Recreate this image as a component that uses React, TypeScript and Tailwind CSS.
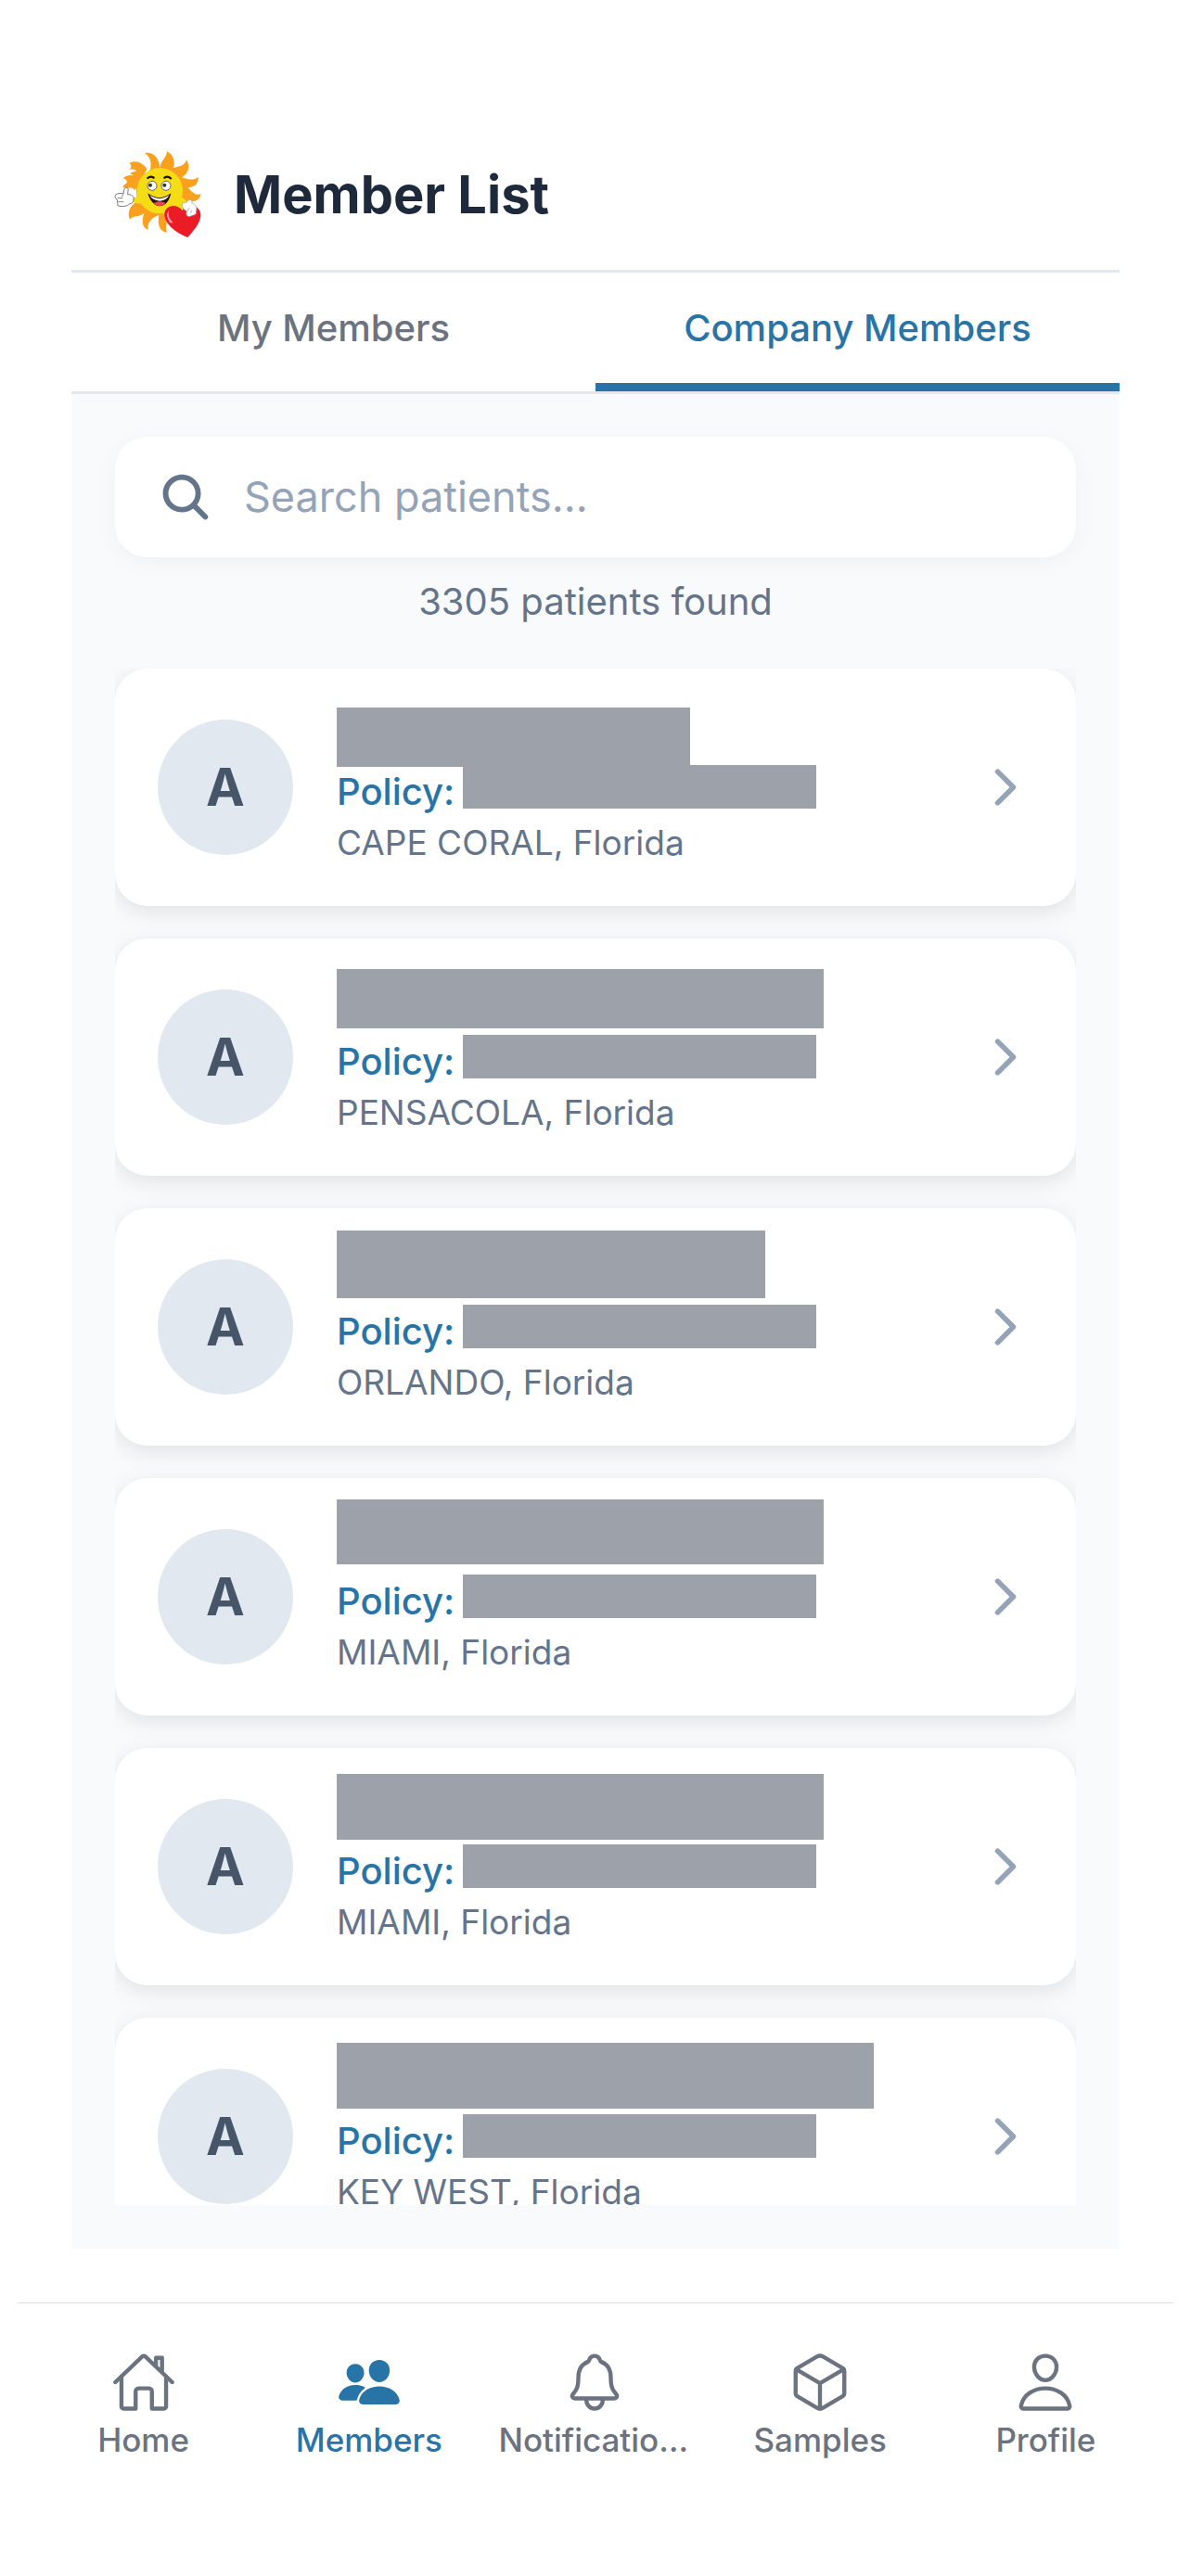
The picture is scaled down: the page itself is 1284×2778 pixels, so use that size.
import { useState } from "react";
import {
  IoChevronForward,
  IoCubeOutline,
  IoHomeOutline,
  IoNotificationsOutline,
  IoPeople,
  IoPersonOutline,
  IoSearch,
} from "react-icons/io5";

const tabs = ["My Members", "Company Members"];

const members = [
  { initial: "A", city: "CAPE CORAL", name: "mt-[42px] h-[64px] w-[381px]" },
  { initial: "A", city: "PENSACOLA", name: "mt-[33px] h-[64px] w-[525px]" },
  { initial: "A", city: "ORLANDO", name: "mt-[24px] h-[73px] w-[462px]" },
  { initial: "A", city: "MIAMI", name: "mt-[23px] h-[70px] w-[525px]" },
  { initial: "A", city: "MIAMI", name: "mt-[28px] h-[71px] w-[525px]" },
  { initial: "A", city: "KEY WEST", name: "mt-[27px] h-[71px] w-[579px]" },
];

const navItems = [
  { label: "Home", icon: IoHomeOutline },
  { label: "Members", icon: IoPeople, active: true },
  { label: "Notifications", icon: IoNotificationsOutline },
  { label: "Samples", icon: IoCubeOutline },
  { label: "Profile", icon: IoPersonOutline },
];

const SunLogo = () => {
  return (
    <svg viewBox="0 0 360 360" className="size-[120px] shrink-0" aria-hidden="true">
      {/* rays */}
      <path
        fill="#f9a11f"
        d="M156 98C162 74 154 56 138 45C164 40 184 58 187 92C190 70 208 62 210 40C230 50 238 70 231 94C246 88 268 88 273 67C286 88 280 112 258 124C275 130 296 136 311 122C312 144 300 156 278 156C288 170 302 184 320 178C316 198 300 206 276 200L240 222L216 242C212 262 202 282 210 302C188 300 178 280 184 246C160 254 144 272 150 293C132 290 126 268 136 240C118 254 100 246 90 260C82 244 86 224 104 208L114 204L110 158C98 150 84 158 67 156C72 142 88 136 108 142C110 128 106 118 90 112C106 100 128 102 142 112Z"
      />
      <path
        fill="#f9a11f"
        d="M67 127C82 112 106 114 125 130L106 166C98 152 86 160 72 158C82 144 86 130 67 127Z M88 78C106 66 132 74 146 98L118 134C120 106 110 94 88 98C96 92 96 84 88 78Z"
      />
      {/* arms and face */}
      <path fill="#f4dd16" d="M250 180L278 205L262 228L235 220ZM118 185L100 190L104 206L125 210Z" />
      <circle cx="187" cy="167" r="74" fill="#f4dd16" />
      <path d="M148 126Q157 118 167 125M202 125Q212 118 222 127" fill="none" stroke="#111" strokeWidth="7" strokeLinecap="round" />
      <circle cx="162" cy="151" r="15" fill="#fff" stroke="#666" strokeWidth="3" />
      <circle cx="207" cy="151" r="15" fill="#fff" stroke="#666" strokeWidth="3" />
      <circle cx="156" cy="149" r="6" fill="#333" />
      <circle cx="202" cy="149" r="6" fill="#333" />
      <path fill="#2b1212" d="M148 175Q185 204 223 175C218 202 202 217 187 217C170 217 154 200 148 175Z" />
      <path fill="#fff" d="M154 181Q186 204 217 181Q210 198 187 200Q162 198 154 181Z" />
      <path fill="#ef4650" d="M167 207Q187 197 206 207Q197 217 187 217Q174 216 167 207Z" />
      {/* heart */}
      <path fill="#ea1c25" d="M277 318C236 303 199 270 202 240C206 213 241 207 260 230C273 206 315 211 319 242C320 270 299 292 277 318Z" />
      <path d="M221 271C209 256 207 239 217 231C212 245 216 257 230 271Z" fill="#fff" opacity=".65" />
      {/* hands */}
      <path
        d="M44 180C51 173 63 177 70 175C69 165 73 155 81 157C88 161 82 173 83 179C95 179 103 184 102 194C103 204 98 208 90 209C81 218 66 219 52 216C48 207 52 203 48 195C42 191 41 185 44 180Z"
        fill="#fff"
        stroke="#777"
        strokeWidth="3"
      />
      <path d="M50 191H67M52 203H70M69 177L64 187" stroke="#888" strokeWidth="3" />
      <path
        d="M262 205C269 209 276 204 280 197C289 193 292 202 290 207C304 211 309 222 304 235C307 246 293 246 290 248C277 255 269 245 274 233C263 230 255 215 262 205Z"
        fill="#fff"
        stroke="#999"
        strokeWidth="2"
      />
      <path d="M275 233L283 222M286 239L290 230" stroke="#888" strokeWidth="2" />
    </svg>
  );
};

const MemberCard = ({ member }: any) => {
  return (
    <li>
      <a
        href="#member"
        className="flex h-[256px] items-center rounded-[35px] bg-white px-[46px] shadow-[0_6px_24px_rgba(0,0,0,0.1)]"
      >
        <span className="mr-[47px] flex size-[146px] shrink-0 items-center justify-center rounded-full bg-[#e2e8f0] text-[56px] font-bold text-[#475569]">
          {member.initial}
        </span>
        <span className="flex h-full min-w-0 flex-1 flex-col">
          <span className="block h-[104px]">
            <span className={`block bg-[#9da1aa] ${member.name}`} />
          </span>
          <span className="flex h-[56px] items-start text-[40px] leading-[58px] font-medium text-[#2874a6]">
            Policy:
            <span className="ml-[9px] h-[47px] w-[381px] bg-[#9da1aa]" />
          </span>
          <span className="text-[37px] leading-[56px] text-[#64748b]">{member.city}, Florida</span>
        </span>
        <IoChevronForward className="size-[60px] shrink-0 text-[#94a3b8]" />
      </a>
    </li>
  );
};

export default function App() {
  const [activeTab, setActiveTab] = useState("Company Members");
  const [query, setQuery] = useState("");

  return (
    <div className="flex min-h-screen flex-col bg-white font-['Inter','Liberation_Sans',sans-serif]">
      <div className="mx-[77px]">
        <header className="flex items-center gap-[22px] border-b-[3px] border-[#e2e8f0] pt-[150px] pr-[46px] pb-[21px] pl-[33px]">
          <SunLogo />
          <h1 className="text-[56px] font-bold text-[#1e293b]">Member List</h1>
        </header>

        <div className="flex border-b-[3px] border-[#e5e7eb]" role="tablist">
          {tabs.map((tab) => (
            <button
              key={tab}
              role="tab"
              aria-selected={tab === activeTab}
              onClick={() => setActiveTab(tab)}
              className={`h-[128px] flex-1 border-b-[9px] text-[40px] font-medium ${
                tab === activeTab ? "border-[#2874a6] text-[#2874a6]" : "border-transparent text-[#6b7280]"
              }`}
            >
              {tab}
            </button>
          ))}
        </div>

        <main className="bg-[#f8fafc] px-[47px] pt-[46px] pb-[47px]">
          <label className="flex h-[130px] items-center gap-[33px] rounded-[35px] bg-white px-[46px] shadow-[0_6px_24px_rgba(0,0,0,0.04)]">
            <IoSearch className="size-[60px] shrink-0 text-[#64748b]" />
            <input
              type="text"
              aria-label="Search patients"
              placeholder="Search patients..."
              value={query}
              onChange={(e) => setQuery(e.target.value)}
              className="min-w-0 flex-1 text-[45px] text-[#1e293b] outline-none placeholder:text-[#94a3b8]"
            />
          </label>
          <p className="pt-[18px] pb-[22px] text-center text-[40px] leading-[60px] text-[#64748b]">
            3305 patients found
          </p>
          <ul className="mt-[20px] flex h-[1657px] flex-col gap-[35px] overflow-hidden">
            {members.map((member, i) => (
              <MemberCard key={i} member={member} />
            ))}
          </ul>
        </main>
      </div>

      <nav className="mx-[19px] mt-[58px] flex border-t border-[#dcdde0] pt-[50px] pr-[16px] pb-[80px] pl-[14px]">
        {navItems.map(({ label, icon: Icon, active }) => (
          <a
            key={label}
            href={`#${label.toLowerCase()}`}
            className={`flex w-0 flex-1 flex-col items-center px-[18px] text-[35px] leading-[54px] font-medium ${
              active ? "text-[#2874a6]" : "text-[#6b7280]"
            }`}
          >
            <Icon className="size-[70px]" />
            <span className="max-w-full truncate">{label}</span>
          </a>
        ))}
      </nav>
    </div>
  );
}
